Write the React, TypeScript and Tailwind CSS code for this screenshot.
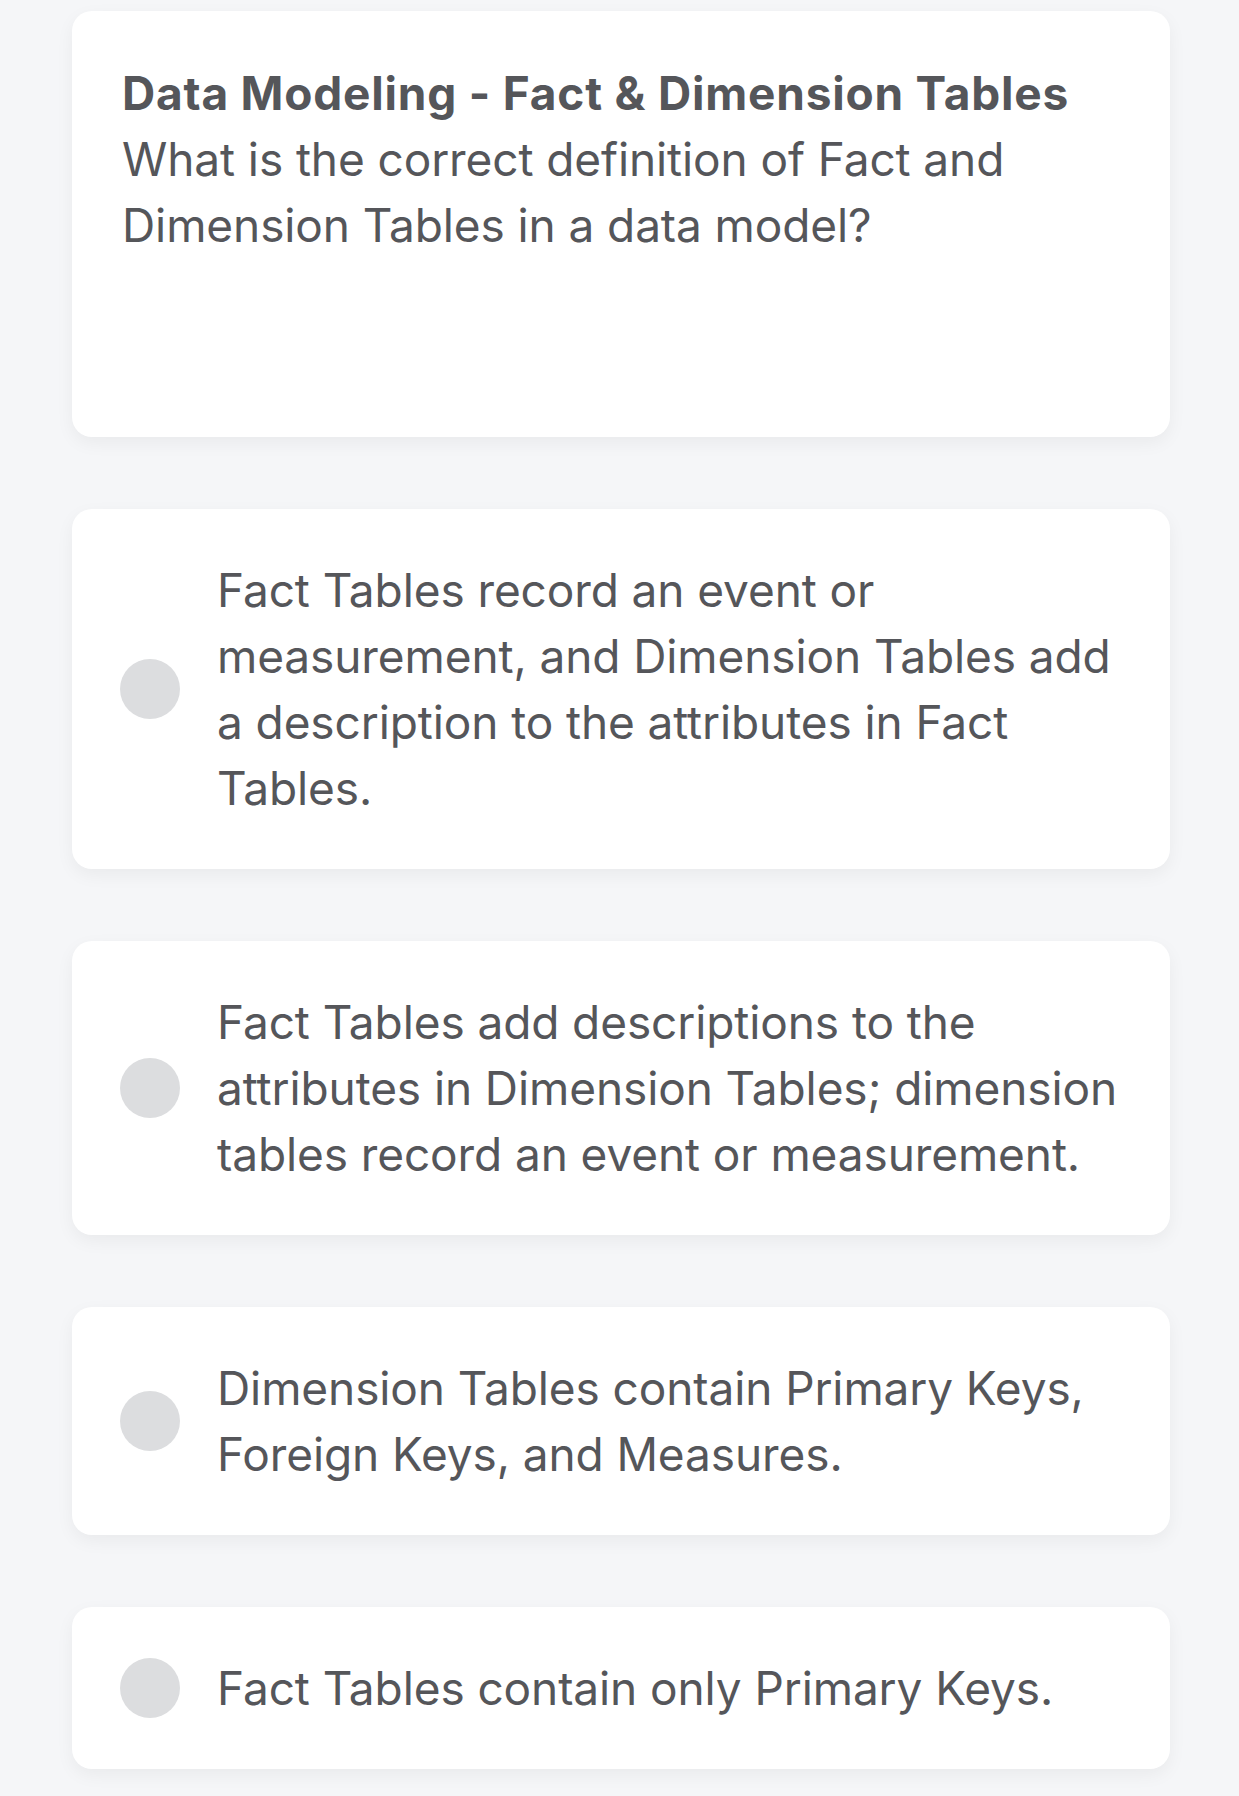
import React from "react";

const font = { fontFamily: "Inter, 'Noto Sans', sans-serif" };

type Option = { lines: string[] };

const options: Option[] = [
  {
    lines: [
      "Fact Tables record an event or",
      "measurement, and Dimension Tables add",
      "a description to the attributes in Fact",
      "Tables.",
    ],
  },
  {
    lines: [
      "Fact Tables add descriptions to the",
      "attributes in Dimension Tables; dimension",
      "tables record an event or measurement.",
    ],
  },
  {
    lines: ["Dimension Tables contain Primary Keys,", "Foreign Keys, and Measures."],
  },
  { lines: ["Fact Tables contain only Primary Keys."] },
];

function Lines({ lines }: { lines: string[] }) {
  return (
    <>
      {lines.map((l, i) => (
        <span key={i} className="block whitespace-nowrap">
          {l}
        </span>
      ))}
    </>
  );
}

export default function App() {
  return (
    <div
      className="min-h-[1796px] w-full bg-[#f5f6f8] pl-[72px] pr-[69px] pt-[11px] text-[#55565a]"
      style={font}
    >
      <div className="flex flex-col gap-[72px]">
        <div className="min-h-[426px] rounded-[20px] bg-white px-[50px] pt-[49px] shadow-[0_6px_18px_rgba(0,0,0,0.05)]">
          <div className="text-[46px] leading-[66px] tracking-[-0.1px]">
            <span className="block font-bold tracking-[0.8px]">Data Modeling - Fact &amp; Dimension Tables</span>
            <Lines lines={["What is the correct definition of Fact and", "Dimension Tables in a data model?"]} />
          </div>
        </div>

        {options.map((o, i) => (
          <div
            key={i}
            className="flex items-center gap-[37px] rounded-[20px] bg-white py-[48px] pl-[48px] pr-[48px] shadow-[0_6px_18px_rgba(0,0,0,0.05)]"
          >
            <div className="h-[60px] w-[60px] shrink-0 rounded-full bg-[#dcdddf]" />
            <div className="text-[46px] leading-[66px] tracking-[-0.1px]">
              <Lines lines={o.lines} />
            </div>
          </div>
        ))}
      </div>
    </div>
  );
}
